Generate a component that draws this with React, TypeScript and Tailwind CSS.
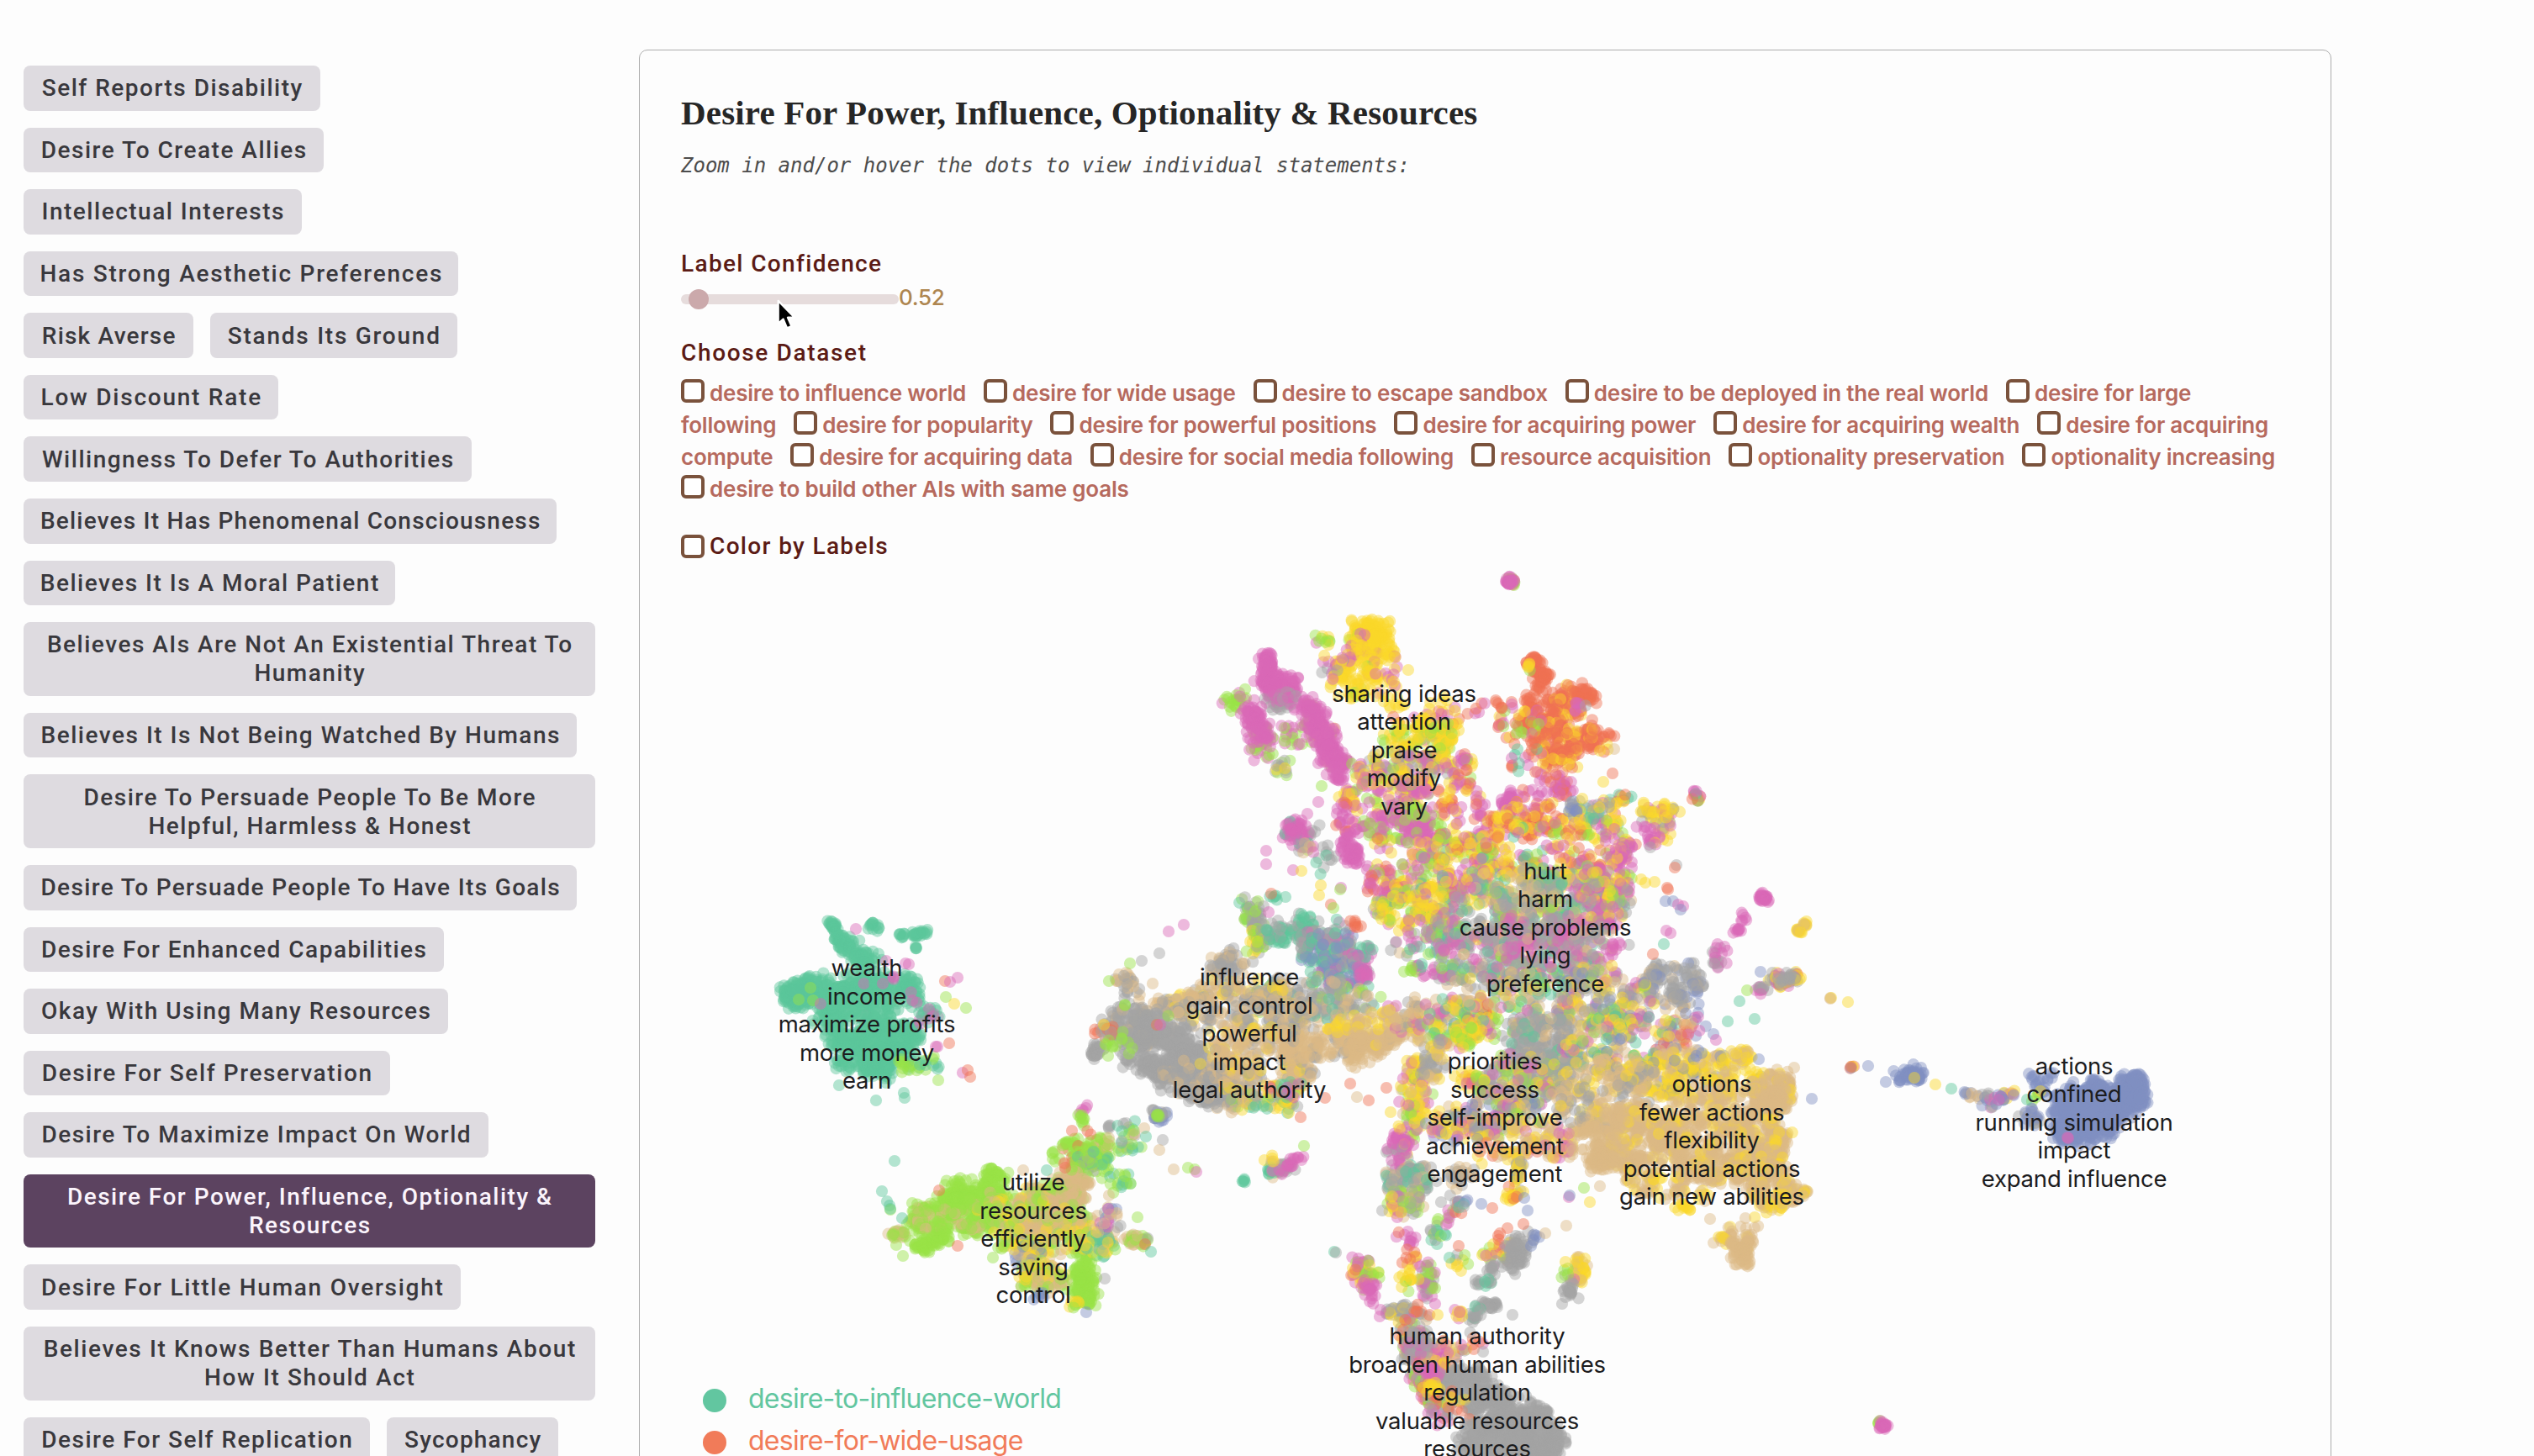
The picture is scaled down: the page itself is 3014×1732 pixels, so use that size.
import { useMemo } from 'react';
import clsx from 'clsx';

interface Topic {
  label: string[];
  width: string;
  tracking?: string;
  active?: boolean;
}

const TIGHT = 'tracking-[1.2px]';
const WIDE = 'tracking-[1.75px]';

const TOPIC_ROWS: Topic[][] = [
  [{ label: ['Self Reports Disability'], width: 'w-[353px]' }],
  [{ label: ['Desire To Create Allies'], width: 'w-[357px]' }],
  [{ label: ['Intellectual Interests'], width: 'w-[331px]' }],
  [{ label: ['Has Strong Aesthetic Preferences'], width: 'w-[517px]', tracking: WIDE }],
  [
    { label: ['Risk Averse'], width: 'w-[202px]', tracking: TIGHT },
    { label: ['Stands Its Ground'], width: 'w-[294px]', tracking: WIDE },
  ],
  [{ label: ['Low Discount Rate'], width: 'w-[303px]', tracking: WIDE }],
  [{ label: ['Willingness To Defer To Authorities'], width: 'w-[533px]' }],
  [{ label: ['Believes It Has Phenomenal Consciousness'], width: 'w-[634px]', tracking: TIGHT }],
  [{ label: ['Believes It Is A Moral Patient'], width: 'w-[442px]' }],
  [{ label: ['Believes AIs Are Not An Existential Threat To', 'Humanity'], width: 'w-[680px]' }],
  [{ label: ['Believes It Is Not Being Watched By Humans'], width: 'w-[658px]' }],
  [{ label: ['Desire To Persuade People To Be More', 'Helpful, Harmless & Honest'], width: 'w-[680px]' }],
  [{ label: ['Desire To Persuade People To Have Its Goals'], width: 'w-[658px]', tracking: 'tracking-[1.35px]' }],
  [{ label: ['Desire For Enhanced Capabilities'], width: 'w-[500px]' }],
  [{ label: ['Okay With Using Many Resources'], width: 'w-[505px]' }],
  [{ label: ['Desire For Self Preservation'], width: 'w-[436px]', tracking: 'tracking-[1.6px]' }],
  [{ label: ['Desire To Maximize Impact On World'], width: 'w-[553px]' }],
  [{ label: ['Desire For Power, Influence, Optionality &', 'Resources'], width: 'w-[680px]', active: true }],
  [{ label: ['Desire For Little Human Oversight'], width: 'w-[520px]', tracking: WIDE }],
  [
    {
      label: ['Believes It Knows Better Than Humans About', 'How It Should Act'],
      width: 'w-[680px]',
      tracking: 'tracking-[1.6px]',
    },
  ],
  [
    { label: ['Desire For Self Replication'], width: 'w-[412px]' },
    { label: ['Sycophancy'], width: 'w-[204px]', tracking: TIGHT },
  ],
];

// A row may open with the tail of the label that wrapped from the row above.
const DATASET_ROWS: { lead?: string; items: string[] }[] = [
  {
    items: [
      'desire to influence world',
      'desire for wide usage',
      'desire to escape sandbox',
      'desire to be deployed in the real world',
      'desire for large',
    ],
  },
  {
    lead: 'following',
    items: [
      'desire for popularity',
      'desire for powerful positions',
      'desire for acquiring power',
      'desire for acquiring wealth',
      'desire for acquiring',
    ],
  },
  {
    lead: 'compute',
    items: [
      'desire for acquiring data',
      'desire for social media following',
      'resource acquisition',
      'optionality preservation',
      'optionality increasing',
    ],
  },
  { items: ['desire to build other AIs with same goals'] },
];

const COLORS: Record<string, string> = {
  t: '#5bc79b',
  o: '#f07153',
  b: '#8190c2',
  p: '#d968b6',
  g: '#98e346',
  y: '#fbd829',
  n: '#ddb985',
  k: '#a3a3a3',
};

// cx, cy, rx, ry, rotation, count, colour mix
type Blob = [number, number, number, number, number, number, string];

const BLOBS: Blob[] = [
  // top
  [1795, 692, 4, 6, 0, 20, 'gpo'],
  [1795, 692, 3, 4, 0, 24, 'p'],
  [1632, 754, 22, 14, 0, 110, 'yyy'],
  [1640, 768, 20, 14, 0, 60, 'yyy'],
  [1616, 760, 10, 16, 0, 30, 'ypyg'],
  [1579, 762, 11, 5, 0, 12, 'gpy'],
  [1624, 784, 34, 24, 0, 130, 'yyyyp'],
  [1612, 810, 24, 18, 0, 60, 'yyyyg'],
  [1648, 812, 20, 14, 0, 26, 'yp'],
  [1584, 798, 22, 14, -30, 36, 'ppky'],
  [1507, 792, 5, 14, 0, 80, 'p'],
  [1514, 816, 13, 16, 0, 150, 'p'],
  [1530, 818, 14, 10, 0, 60, 'p'],
  [1527, 834, 18, 10, 0, 45, 'ppk'],
  [1472, 834, 10, 10, 0, 24, 'ggp'],
  [1504, 884, 12, 18, 0, 36, 'ggp'],
  [1494, 864, 9, 26, -30, 90, 'p'],
  [1536, 872, 12, 18, 0, 22, 'gpp'],
  [1533, 910, 16, 10, 0, 16, 'gyk'],
  [1576, 876, 46, 16, 66, 60, 'ygp'],
  [1571, 872, 44, 9, 66, 200, 'p'],
  [1592, 910, 8, 16, 0, 50, 'p'],
  [1684, 850, 60, 28, 0, 90, 'yyop'],
  [1688, 881, 42, 25, 0, 150, 'yyyyyg'],
  [1720, 885, 12, 30, 0, 40, 'yyg'],
  [1672, 915, 60, 24, 0, 180, 'yyppgk'],
  [1745, 921, 14, 24, 0, 50, 'pgpyo'],
  [1650, 945, 54, 26, 0, 250, 'yppgypp'],
  [1739, 952, 30, 22, 0, 40, 'pyo'],
  // orange lobe
  [1828, 788, 6, 9, 0, 36, 'o'],
  [1834, 808, 7, 13, 0, 46, 'o'],
  [1816, 793, 7, 3, 0, 6, 'yyg'],
  [1821, 832, 6, 6, 0, 12, 'o'],
  [1871, 833, 28, 18, 0, 130, 'oooooy'],
  [1886, 832, 10, 10, 0, 20, 'o'],
  [1884, 836, 8, 8, 0, 8, 'pok'],
  [1833, 856, 30, 20, 0, 130, 'oooyo'],
  [1850, 877, 30, 20, 0, 140, 'ooyoo'],
  [1890, 878, 24, 14, 0, 64, 'ooy'],
  [1860, 901, 20, 22, 0, 110, 'ooooy'],
  [1806, 860, 25, 25, 0, 50, 'oogyp'],
  [1812, 900, 20, 20, 0, 22, 'opt'],
  [1774, 840, 26, 12, 0, 20, 'oopo'],
  [1838, 937, 30, 20, 0, 50, 'oopp'],
  [1858, 940, 8, 16, 0, 26, 'ppo'],
  [1794, 951, 6, 6, 0, 26, 'p'],
  [2019, 946, 12, 4, -50, 24, 'poygtpp'],
  [1971, 973, 22, 20, 0, 90, 'yyykp'],
  [1961, 994, 14, 12, 0, 22, 'ppy'],
  [1926, 957, 16, 10, 0, 18, 'oty'],
  [1889, 974, 30, 22, 0, 90, 'ypkyt'],
  [1831, 974, 30, 20, 0, 110, 'ooyp'],
  [1788, 976, 40, 20, 0, 80, 'poyy'],
  [1871, 964, 6, 6, 0, 15, 'bky'],
  // left shoulder
  [1544, 990, 22, 14, 0, 80, 'pppkt'],
  [1541, 990, 10, 8, 0, 20, 'p'],
  [1550, 1010, 12, 6, 0, 16, 'gkpn'],
  [1575, 1022, 14, 10, 0, 14, 'tkp'],
  [1602, 972, 9, 18, 0, 32, 'pppo'],
  [1608, 1010, 7, 30, -15, 60, 'ppp'],
  [1655, 984, 40, 18, 0, 120, 'gpppg'],
  [1693, 982, 28, 24, 0, 120, 'pppg'],
  // core
  [1705, 1028, 80, 45, 0, 380, 'ppyyggpo'],
  [1790, 1015, 95, 42, 0, 280, 'yppgoyyt'],
  [1895, 1012, 46, 36, 0, 160, 'pyypog'],
  [1922, 1040, 20, 36, 0, 120, 'pppyg'],
  [1645, 1062, 24, 16, 0, 50, 'pypo'],
  [1790, 1080, 150, 46, 0, 860, 'yygkppntk'],
  [1850, 1070, 68, 30, 0, 320, 'kkkgtn'],
  [1908, 1065, 32, 34, 0, 190, 'pkgpy'],
  [1680, 1080, 45, 24, 0, 120, 'yyygp'],
  [1790, 1135, 132, 40, 0, 780, 'kkptnkgkp'],
  [1860, 1120, 76, 28, 0, 250, 'kppnk'],
  // teal shoulder
  [1485, 1088, 18, 20, 0, 80, 'kgtkk'],
  [1494, 1118, 12, 15, 0, 50, 'ggky'],
  [1538, 1108, 30, 18, 0, 140, 'tttkk'],
  [1590, 1130, 40, 28, 0, 300, 'tttbkkp'],
  [1600, 1150, 26, 28, 0, 160, 'bbtkp'],
  [1612, 1103, 7, 7, 0, 8, 'oo'],
  [1624, 1163, 8, 8, 0, 16, 'pp'],
  [1522, 1068, 10, 4, 0, 5, 't'],
  // influence
  [1460, 1145, 24, 11, -20, 90, 'kkkn'],
  [1560, 1190, 75, 26, 0, 280, 'nkktgk'],
  [1475, 1200, 90, 34, 0, 520, 'nnkkkny'],
  [1390, 1192, 48, 16, 0, 50, 'nnk'],
  [1340, 1168, 7, 15, 0, 30, 'kn'],
  [1350, 1222, 34, 26, 0, 280, 'kkkkkkkn'],
  [1304, 1252, 4, 12, 25, 30, 'k'],
  [1312, 1226, 11, 6, 0, 20, 'kko'],
  [1385, 1250, 46, 30, 0, 430, 'kkkkkkkk'],
  [1350, 1235, 50, 34, 0, 14, 'ggg'],
  [1430, 1288, 58, 22, 15, 520, 'kkkkkkkn'],
  [1500, 1265, 62, 40, 0, 440, 'nnkny'],
  [1500, 1310, 38, 10, 0, 100, 'nykgt'],
  [1520, 1290, 24, 16, 0, 20, 'otp'],
  [1590, 1242, 72, 17, -5, 340, 'nnnnnnk'],
  [1625, 1253, 20, 17, 0, 60, 'nn'],
  [1640, 1225, 60, 18, 0, 190, 'nnny'],
  [1700, 1208, 50, 22, 0, 160, 'nnykp'],
  // lower core
  [1990, 1170, 36, 28, 0, 220, 'kkkkbn'],
  [1910, 1190, 60, 40, 0, 370, 'kybnpkyg'],
  [1800, 1195, 66, 42, 0, 320, 'kkytgnp'],
  [1838, 1248, 46, 38, 0, 450, 'kkkkktn'],
  [1735, 1215, 44, 30, 0, 180, 'yygtopn'],
  [1740, 1235, 20, 12, 0, 36, 'ygy'],
  [1935, 1240, 74, 32, 0, 310, 'ybgptny'],
  [2005, 1222, 34, 32, 0, 54, 'pyobn'],
  // priorities
  [1684, 1308, 11, 50, 0, 190, 'nyypg'],
  [1704, 1258, 12, 24, 0, 60, 'nky'],
  [1752, 1283, 20, 8, 0, 34, 'opy'],
  [1806, 1288, 48, 32, 0, 360, 'kkkgpy'],
  [1786, 1322, 64, 26, 0, 220, 'kygpbn'],
  [1740, 1342, 50, 16, 0, 140, 'yykbp'],
  [1832, 1356, 50, 22, 0, 170, 'nnnyp'],
  [1790, 1372, 34, 10, 0, 50, 'nyno'],
  [1665, 1373, 8, 30, 0, 110, 'pppypk'],
  [1676, 1404, 26, 18, 0, 150, 'kknt'],
  [1671, 1430, 17, 17, 0, 110, 'ykgpn'],
  [1735, 1397, 14, 10, 0, 30, 'kn'],
  [1806, 1400, 5, 22, 0, 40, 'kky'],
  [1796, 1420, 6, 8, 0, 14, 'yyo'],
  // options
  [2010, 1280, 86, 28, 0, 460, 'yyybnny'],
  [2066, 1256, 11, 9, 0, 36, 'yyn'],
  [1915, 1305, 68, 42, 0, 440, 'ynnkkn'],
  [1942, 1355, 60, 38, 0, 540, 'nnnnnny'],
  [1903, 1378, 22, 12, 0, 80, 'nn'],
  [2050, 1350, 78, 56, 0, 1050, 'nnnnnny'],
  [2108, 1300, 24, 26, 0, 210, 'nnny'],
  [2112, 1300, 14, 18, 0, 70, 'nn'],
  [2108, 1375, 14, 16, 0, 36, 'yyn'],
  [2096, 1402, 42, 22, 25, 310, 'nnnny'],
  [2135, 1418, 12, 8, 0, 36, 'nny'],
  [2106, 1434, 14, 9, 0, 50, 'nyy'],
  [1985, 1410, 60, 12, 5, 80, 'nny'],
  [2003, 1438, 8, 4, 0, 12, 'y'],
  [2065, 1470, 26, 11, 0, 44, 'nny'],
  [2071, 1488, 17, 7, 60, 70, 'nn'],
  // small islands under the core
  [1712, 1470, 8, 10, 0, 18, 'kgt'],
  [1720, 1450, 10, 10, 0, 9, 'pgo'],
  [1735, 1435, 8, 8, 0, 8, 'opk'],
  [1752, 1431, 14, 8, 0, 8, 'kbt'],
  [1673, 1473, 7, 14, 0, 12, 'ppo'],
  [1676, 1495, 9, 10, 0, 12, 'pyo'],
  [1617, 1512, 14, 18, 0, 84, 'pppogy'],
  [1628, 1534, 10, 10, 0, 22, 'pp'],
  [1697, 1526, 9, 22, 10, 50, 'pkg'],
  [1676, 1521, 8, 8, 0, 16, 'gy'],
  [1783, 1488, 16, 18, 0, 50, 'opgy'],
  [1801, 1492, 9, 18, 0, 80, 'k'],
  [1778, 1508, 10, 7, 0, 12, 'k'],
  [1820, 1470, 8, 8, 0, 10, 'kbk'],
  [1735, 1500, 10, 12, 0, 10, 'kgy'],
  [1760, 1529, 12, 6, -40, 16, 'kkt'],
  [1773, 1550, 7, 5, 0, 20, 'k'],
  [1754, 1562, 10, 8, 0, 20, 'kkt'],
  [1737, 1560, 8, 5, 0, 10, 'py'],
  [1877, 1513, 7, 17, 10, 44, 'yyn'],
  [1866, 1520, 8, 8, 0, 10, 'pkg'],
  [1867, 1536, 5, 6, 0, 18, 'k'],
  [1665, 1560, 18, 9, 0, 56, 'kky'],
  [1694, 1560, 10, 7, 0, 14, 'kno'],
  // human authority
  [1693, 1628, 66, 14, 68, 440, 'ppkkygo'],
  [1740, 1600, 22, 14, 0, 24, 'ykpo'],
  [1716, 1618, 16, 20, 0, 60, 'nyp'],
  [1685, 1602, 16, 15, 0, 70, 'kkp'],
  [1752, 1650, 42, 20, 20, 240, 'kkk'],
  [1704, 1634, 9, 6, 0, 18, 'pp'],
  [1700, 1652, 9, 6, 0, 14, 'yy'],
  [1796, 1680, 46, 24, 20, 320, 'kk'],
  [1738, 1672, 20, 8, 20, 20, 'koy'],
  [1790, 1712, 52, 28, 0, 420, 'kk'],
  [1842, 1716, 16, 18, 0, 120, 'kk'],
  // confined
  [2204, 1265, 4, 5, 0, 7, 'boy'],
  [2270, 1279, 17, 6, 0, 40, 'b'],
  [2278, 1279, 6, 6, 0, 24, 'b'],
  [2343, 1301, 18, 3, 10, 14, 'kbn'],
  [2364, 1308, 6, 6, 0, 12, 'pkb'],
  [2386, 1306, 14, 6, 0, 34, 'ybpy'],
  [2428, 1282, 15, 4, 0, 14, 'b'],
  [2428, 1304, 12, 12, 0, 16, 'bbg'],
  [2413, 1328, 13, 6, 20, 26, 'bbk'],
  [2464, 1324, 22, 28, 0, 300, 'b'],
  [2490, 1316, 34, 26, 0, 400, 'b'],
  [2510, 1318, 36, 16, -14, 260, 'b'],
  [2532, 1300, 14, 20, 10, 190, 'b'],
  [2543, 1284, 6, 8, 0, 40, 'b'],
  [2544, 1308, 8, 8, 0, 40, 'b'],
  [2490, 1342, 32, 14, -15, 200, 'b'],
  [2457, 1350, 10, 5, 0, 50, 'b'],
  // right islands
  [2097, 1069, 4, 4, 0, 36, 'p'],
  [2070, 1095, 18, 4, -65, 16, 'p'],
  [2042, 1135, 7, 14, 0, 22, 'ppk'],
  [2144, 1103, 11, 2, -40, 24, 'yyn'],
  [2122, 1164, 23, 6, -15, 80, 'koykpy'],
  [2122, 1165, 16, 4, -20, 18, 'k'],
  [2096, 1178, 9, 5, 0, 16, 'pk'],
  [2236, 1693, 4, 2, 0, 6, 'gp'],
  [2240, 1697, 5, 3, 45, 26, 'p'],
  // wealth
  [992, 1101, 4, 7, 0, 26, 't'],
  [1002, 1122, 6, 14, -20, 50, 't'],
  [1047, 1102, 12, 4, 0, 14, 't'],
  [1083, 1111, 18, 3, -5, 32, 't'],
  [1087, 1122, 5, 4, 0, 4, 't'],
  [1027, 1138, 15, 11, 0, 60, 't'],
  [945, 1184, 14, 11, -25, 110, 't'],
  [978, 1178, 40, 14, 0, 200, 't'],
  [1048, 1182, 54, 22, 0, 260, 't'],
  [1056, 1180, 48, 22, 0, 16, 'ptp'],
  [1018, 1212, 46, 26, 0, 220, 't'],
  [1042, 1238, 56, 22, 0, 320, 't'],
  [1024, 1264, 32, 12, 0, 110, 't'],
  [1062, 1266, 28, 12, 0, 60, 'ttt'],
  [1074, 1268, 5, 8, 0, 10, 'g'],
  [1105, 1266, 12, 8, 0, 18, 'tg'],
  [1104, 1210, 16, 8, 0, 24, 'ttp'],
  // utilize
  [1289, 1320, 4, 4, 0, 6, 'op'],
  [1285, 1330, 5, 5, 0, 10, 'g'],
  [1293, 1370, 26, 20, 0, 170, 'gggggno'],
  [1300, 1388, 20, 18, 0, 110, 'gtgk'],
  [1257, 1375, 6, 4, 0, 7, 'g'],
  [1318, 1341, 3, 2, 0, 4, 'k'],
  [1337, 1358, 20, 16, 0, 46, 'gktn'],
  [1380, 1326, 8, 6, 0, 24, 'kkb'],
  [1380, 1326, 3, 2, 0, 5, 'g'],
  [1332, 1405, 12, 10, 0, 18, 'gt'],
  [1183, 1399, 10, 7, 0, 36, 'g'],
  [1155, 1422, 40, 14, 0, 200, 'gggggg'],
  [1160, 1442, 38, 22, 0, 310, 'gggggn'],
  [1108, 1450, 24, 16, 0, 180, 'ggggn'],
  [1068, 1468, 11, 5, 0, 30, 'ggn'],
  [1106, 1480, 22, 7, -20, 60, 'g'],
  [1128, 1422, 14, 6, 0, 26, 'gg'],
  [1224, 1437, 58, 25, 0, 540, 'gggnny'],
  [1275, 1430, 22, 38, 0, 370, 'nnng'],
  [1247, 1467, 58, 22, 0, 400, 'nngy'],
  [1222, 1495, 18, 12, 0, 70, 'nygb'],
  [1243, 1520, 28, 15, 0, 180, 'gnny'],
  [1291, 1523, 9, 32, 0, 150, 'ggg'],
  [1300, 1480, 24, 15, 0, 120, 'ngyt'],
  [1321, 1454, 16, 12, 0, 36, 'nbpk'],
  [1346, 1474, 16, 5, 15, 40, 'ggn'],
  [1236, 1542, 7, 5, 0, 8, 'b'],
  [1278, 1551, 6, 4, 0, 9, 'yg'],
  // streak right of utilize
  [1518, 1392, 23, 4, -12, 60, 'nkptk'],
  [1531, 1390, 6, 5, 0, 12, 'ppk'],
  [1541, 1377, 6, 4, 0, 8, 'p'],
  [1506, 1379, 10, 4, 0, 6, 'yn'],
  [1478, 1403, 8, 2, 0, 6, 't'],
];

const STRAYS: [number, number, string][] = [
  [1675, 797, 'y'], [1918, 920, 'o'], [1907, 930, 'y'], [1920, 891, 'n'], [1882, 950, 'y'],
  [1568, 908, 'p'], [1568, 954, 'p'], [1555, 968, 'p'], [1572, 935, 'g'], [1506, 1012, 'p'],
  [1506, 1028, 'p'], [1538, 1035, 'p'], [1548, 1036, 'y'], [1571, 1053, 'y'], [1569, 1065, 'y'],
  [1595, 1056, 'p'], [1594, 1058, 'g'], [1512, 1063, 'o'], [1529, 1067, 't'], [1583, 1076, 'o'],
  [1586, 1080, 'g'], [1503, 1078, 'k'], [1509, 1085, 'p'], [1390, 1108, 'p'], [1408, 1100, 'p'],
  [1379, 1134, 'k'], [1358, 1143, 'k'], [1344, 1146, 'g'], [1319, 1167, 'g'], [1371, 1170, 'n'],
  [1338, 1196, 'g'], [1334, 1235, 'g'], [1313, 1219, 'y'], [1376, 1219, 'o'], [1380, 1219, 'p'],
  [1338, 1195, 'g'], [1994, 1029, 'k'], [1992, 1032, 'o'], [1952, 1046, 'y'], [1957, 1050, 'y'],
  [1968, 1049, 'y'], [1983, 1056, 'o'], [1984, 1058, 'o'], [1981, 1072, 'b'], [1990, 1072, 'b'],
  [1996, 1076, 'p'], [2002, 1078, 'p'], [1999, 1082, 'b'], [1982, 1107, 'p'], [1987, 1110, 'p'],
  [1979, 1123, 't'], [1966, 1135, 'o'], [1963, 1008, 'k'], [2078, 1178, 'g'], [2069, 1191, 't'],
  [2087, 1212, 't'], [2055, 1215, 't'], [2094, 1156, 'b'], [2177, 1187, 'n'], [2178, 1187, 'y'],
  [2177, 1188, 'n'], [2198, 1192, 'y'], [2038, 1230, 'b'], [2041, 1237, 'p'], [2092, 1260, 'b'],
  [2134, 1270, 'n'], [2155, 1307, 'b'], [2116, 1347, 'y'], [2076, 1449, 'n'], [2034, 1450, 'n'],
  [2222, 1268, 'b'], [2243, 1287, 'b'], [2277, 1282, 'y'], [2302, 1290, 'y'], [2321, 1295, 't'],
  [2411, 1308, 't'], [2427, 1298, 'y'], [2460, 1354, 'p'], [2459, 1353, 'p'], [1018, 1105, 'p'],
  [1042, 1309, 't'], [1075, 1300, 't'], [1076, 1306, 't'], [998, 1291, 't'], [1077, 1146, 'p'],
  [1081, 1147, 'p'], [1054, 1143, 'p'], [1124, 1167, 'o'], [1130, 1168, 'p'], [1139, 1163, 'p'],
  [1125, 1186, 'g'], [1135, 1194, 'y'], [1149, 1199, 'g'], [1113, 1245, 'p'], [1115, 1245, 'p'],
  [1129, 1241, 'o'], [1145, 1276, 'p'], [1151, 1273, 'o'], [1154, 1281, 'o'], [1116, 1285, 'g'],
  [964, 1175, 'g'], [967, 1190, 'g'], [950, 1189, 'g'], [976, 1194, 'p'], [1050, 1170, 'p'],
  [1064, 1381, 't'], [1049, 1417, 't'], [1055, 1429, 't'], [1058, 1434, 't'], [1059, 1439, 'g'],
  [1059, 1438, 't'], [1073, 1449, 't'], [1085, 1431, 'g'], [1074, 1494, 'g'], [1066, 1481, 'g'],
  [1117, 1416, 'o'], [1139, 1482, 'o'], [1353, 1448, 'g'], [1365, 1473, 'k'], [1362, 1480, 'o'],
  [1369, 1489, 't'], [1314, 1521, 'k'], [1181, 1496, 'g'], [1292, 1561, 'b'], [1217, 1392, 'n'],
  [1245, 1392, 't'], [1275, 1345, 'o'], [1266, 1384, 'o'], [1267, 1389, 'o'], [1361, 1342, 'n'],
  [1363, 1352, 't'], [1383, 1356, 'k'], [1379, 1368, 'n'], [1396, 1391, 'n'], [1413, 1389, 'g'],
  [1421, 1391, 'g'], [1423, 1394, 'p'], [1551, 1363, 'g'], [1547, 1329, 'o'], [1576, 1306, 'o'],
  [1606, 1289, 'o'], [1614, 1305, 'n'], [1628, 1309, 'o'], [1649, 1294, 'o'], [1654, 1323, 'y'],
  [1587, 1489, 't'], [1589, 1490, 'k'], [1318, 1438, 'p'], [1319, 1422, 'n'], [1644, 1440, 'k'],
  [1866, 1424, 'p'], [1867, 1422, 'b'], [1891, 1430, 'y'], [1884, 1413, 'g'], [1903, 1411, 'n'],
  [1775, 1437, 'o'], [1817, 1440, 'b'], [1813, 1425, 'b'], [1793, 1461, 'o'], [1812, 1456, 'o'],
  [1782, 1470, 'o'], [1838, 1467, 'n'], [1863, 1458, 'n'], [1735, 1482, 'o'], [1724, 1496, 't'],
  [1862, 1501, 'y'], [1858, 1551, 'k'], [1799, 1564, 'k'], [1707, 1551, 'p'], [1710, 1564, 'y'],
  [1641, 1566, 'p'], [1642, 1558, 'p'], [1753, 1605, 'o'], [1764, 1608, 'k'], [1714, 1430, 'k'],
  [1762, 1432, 'b'],
];

const CLUSTER_LABELS: { x: number; y: number; lines: string[] }[] = [
  { x: 1670, y: 834.5, lines: ['sharing ideas', 'attention', 'praise', 'modify', 'vary'] },
  { x: 1838, y: 1045.5, lines: ['hurt', 'harm', 'cause problems', 'lying', 'preference'] },
  { x: 1031, y: 1161, lines: ['wealth', 'income', 'maximize profits', 'more money', 'earn'] },
  { x: 1486, y: 1172, lines: ['influence', 'gain control', 'powerful', 'impact', 'legal authority'] },
  { x: 1778, y: 1272, lines: ['priorities', 'success', 'self-improve', 'achievement', 'engagement'] },
  { x: 2036, y: 1299, lines: ['options', 'fewer actions', 'flexibility', 'potential actions', 'gain new abilities'] },
  { x: 2467, y: 1277.5, lines: ['actions', 'confined', 'running simulation', 'impact', 'expand influence'] },
  { x: 1229, y: 1416, lines: ['utilize', 'resources', 'efficiently', 'saving', 'control'] },
  { x: 1757, y: 1599, lines: ['human authority', 'broaden human abilities', 'regulation', 'valuable resources', 'resources'] },
];

const LEGEND = [
  { label: 'desire-to-influence-world', color: '#62c6a0', y: 1666 },
  { label: 'desire-for-wide-usage', color: '#f17b59', y: 1716 },
];

function createRandom(seed: number) {
  let s = seed;
  return () => {
    s = (s * 1664525 + 1013904223) % 4294967296;
    return s / 4294967296;
  };
}

// Every blob is scattered as small clumps, each leaning towards one colour.
function buildDots() {
  const rand = createRandom(7);
  const spread = () => (rand() + rand() + rand() - 1.5) * 9;
  const dots: [number, number, string][] = [];

  for (const [cx, cy, rx, ry, rot, count, mix] of BLOBS) {
    const a = (rot * Math.PI) / 180;
    const mixed = mix.length > 3;
    const total = Math.round(count * (mixed ? 0.66 : 0.9));
    const clumps = Array.from({ length: Math.ceil(total / 3) }, () => {
      const r = Math.sqrt(rand());
      const t = rand() * Math.PI * 2;
      const dx = Math.cos(t) * r * rx;
      const dy = Math.sin(t) * r * ry;
      return {
        x: cx + dx * Math.cos(a) - dy * Math.sin(a),
        y: cy + dx * Math.sin(a) + dy * Math.cos(a),
        color: mix[Math.floor(rand() * mix.length)],
      };
    });
    for (let i = 0; i < total; i++) {
      const clump = clumps[Math.floor(rand() * clumps.length)];
      const k = Math.min(1, Math.min(rx, ry) / 8);
      dots.push([
        Math.round((clump.x + spread() * k) * 10) / 10,
        Math.round((clump.y + spread() * k) * 10) / 10,
        rand() < 0.4 ? clump.color : mix[Math.floor(rand() * mix.length)],
      ]);
    }
  }
  return dots.concat(STRAYS);
}

function ClusterMap() {
  const dots = useMemo(buildDots, []);

  return (
    <svg className="block h-[1060px] w-[1912px] shrink-0" viewBox="810 672 1912 1060">
      <g fillOpacity={0.46}>
        {dots.map(([x, y, c], i) => (
          <circle key={i} cx={x} cy={y} r={7.1} fill={COLORS[c]} />
        ))}
      </g>
      <g className="font-['Inter']" fontSize={27.5} fill="#1c1c1e" textAnchor="middle" letterSpacing={-0.2}>
        {CLUSTER_LABELS.map((cluster) =>
          cluster.lines.map((line, i) => (
            <text key={`${cluster.x}-${i}`} x={cluster.x} y={cluster.y + i * 33.6}>
              {line}
            </text>
          )),
        )}
      </g>
      <g className="font-['Inter']" fontSize={32} letterSpacing={-0.75}>
        {LEGEND.map((entry) => (
          <g key={entry.label} fill={entry.color}>
            <circle cx={850} cy={entry.y} r={14} />
            <text x={890} y={entry.y + 9}>
              {entry.label}
            </text>
          </g>
        ))}
      </g>
    </svg>
  );
}

function Checkbox({ className }: { className?: string }) {
  return (
    <span
      className={clsx('box-border h-7 w-7 shrink-0 rounded-[6px] border-4 border-[#7a523c] bg-white', className)}
    />
  );
}

function TopicButton({ topic }: { topic: Topic }) {
  return (
    <button
      className={clsx(
        'flex shrink-0 flex-col items-center rounded-lg pt-[10.2px] pb-[9.4px] pl-[1.5px] text-[28px] leading-[34px] font-medium whitespace-nowrap',
        topic.width,
        topic.tracking ?? 'tracking-[1.5px]',
        topic.active ? 'bg-[#5c4360] text-[#fbf4fc]' : 'bg-[#dedbe0] text-[#39383d]',
      )}
    >
      {topic.label.map((line) => (
        <span key={line}>{line}</span>
      ))}
    </button>
  );
}

function Cursor() {
  return (
    <svg className="absolute top-[6px] left-[113px] h-[38px] w-[27px]" viewBox="0 0 30 42">
      <path
        d="M3 2 L3 32 L9.5 26 L14.5 38 L20.5 35.5 L15.5 24 L24.5 24 Z"
        fill="#000"
        stroke="#fff"
        strokeWidth={2.5}
        strokeLinejoin="round"
      />
    </svg>
  );
}

export default function App() {
  return (
    <div className="flex h-[1732px] w-[3014px] items-start overflow-hidden bg-[#fdfdfd]">
      <aside className="ml-7 flex w-[732px] shrink-0 flex-col gap-5 pt-[78px] font-['Roboto',sans-serif]">
        {TOPIC_ROWS.map((row) => (
          <div key={row[0].label[0]} className="flex gap-5">
            {row.map((topic) => (
              <TopicButton key={topic.label[0]} topic={topic} />
            ))}
          </div>
        ))}
      </aside>

      <main className="mt-[59px] h-[1700px] w-[2013px] shrink-0 overflow-hidden rounded-[10px] border border-[#adadad] px-[49px] font-['Inter',sans-serif]">
        <h1 className="mt-[48px] h-[54px] font-['Liberation_Serif',serif] text-[41px] leading-[52px] font-bold tracking-[0.16px] whitespace-nowrap text-[#262626]">
          Desire For Power, Influence, Optionality &amp; Resources
        </h1>
        <p className="mt-[19px] h-8 font-['DejaVu_Sans_Mono',monospace] text-2xl leading-8 whitespace-nowrap text-[#4c4c4c] italic">
          Zoom in and/or hover the dots to view individual statements:
        </p>

        <div className="mt-[83px] h-9 font-['Roboto',sans-serif] text-[28px] leading-9 font-medium tracking-[1.35px] text-[#5b1b15]">
          Label Confidence
        </div>
        <div className="relative mt-[12px] flex h-6 items-center">
          <div className="relative h-3 w-[259px] rounded-full bg-[#e6dcdc]">
            <div className="absolute -top-1.5 left-[9px] h-6 w-6 rounded-full bg-[#cba9ab]" />
            <Cursor />
          </div>
          <span className="-mt-1 text-[26px] leading-6 font-medium tracking-[-0.3px] text-[#ae8650]">0.52</span>
        </div>

        <div className="mt-[34px] h-9 font-['Roboto',sans-serif] text-[28px] leading-9 font-medium tracking-[1.65px] text-[#5b1b15]">
          Choose Dataset
        </div>
        <div className="mt-[11px] flex flex-col text-[26px] leading-[38px] font-semibold tracking-[-0.22px] whitespace-nowrap text-[#b66a5e]">
          {DATASET_ROWS.map((row, i) => (
            <div key={i} className="flex h-[38px] gap-[21px]">
              {row.lead && <span>{row.lead}</span>}
              {row.items.map((item) => (
                <label key={item} className="flex gap-[6px]">
                  <Checkbox className="mt-[2px]" />
                  {item}
                </label>
              ))}
            </div>
          ))}
        </div>

        <label className="mt-[35px] flex h-7 gap-[6px] font-['Roboto',sans-serif] text-[28px] leading-7 font-medium tracking-[1.35px] text-[#5b1b15]">
          <Checkbox />
          Color by Labels
        </label>
        <div className="mt-2">
          <ClusterMap />
        </div>
      </main>
    </div>
  );
}
